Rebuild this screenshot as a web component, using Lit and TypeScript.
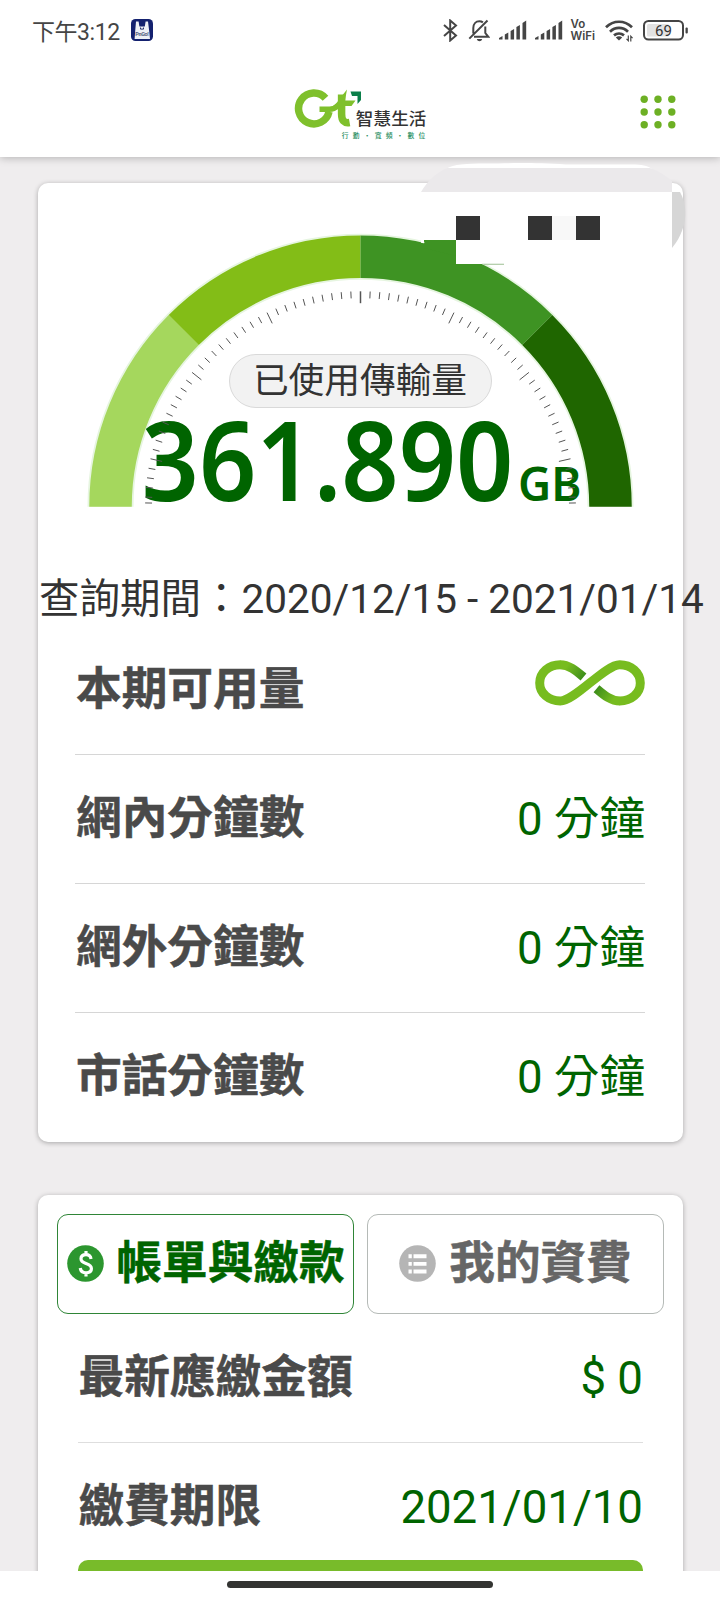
import { html, svg, css, LitElement } from "lit";
import { customElement, property, state } from "lit/decorators.js";
import { classMap } from "lit/directives/class-map.js";

interface UsageRow {
  label: string;
  value?: string;
  unlimited?: boolean;
}

@customElement("status-bar")
export class StatusBarElement extends LitElement {
  @property()
  time = "";

  @property({ type: Number })
  battery = 0;

  renderSignal() {
    return html`
      <svg class="signal" width="28" height="20" viewBox="0 0 28 20">
        <path d="M0 19.500v-1.500l3.500-2v3.500zM5.800 19.500v-5l3.500-2v7zM11.600 19.500v-8.500l3.500-2v10.500zM17.400 19.500v-12.500l3.500-2v14.500zM23.500 19.500v-16.500l3.700-2.500v19z" />
      </svg>
    `;
  }

  override render() {
    return html`
      <span class="time">${this.time}</span>
      <svg class="app" width="22" height="22" viewBox="0 0 22 22">
        <rect width="22" height="22" rx="4.500" fill="#14216f" />
        <path d="M5 2.500h2.600l.8 5h5.400l.8-5H17l1.200 9.500.8 8H3.600l.6-8z" fill="#eef0f6" />
        <path d="M9.500 8.500v1.600h3V8.500" fill="none" stroke="#26306b" stroke-width="1" />
        <text x="4.200" y="16.600" font-size="5.500" font-weight="700" fill="#555b80" textLength="13.600">PnGo!</text>
      </svg>
      <div class="icons">
        <svg width="15" height="23" viewBox="0 0 15 23" class="line">
          <path d="M1 6l12 10.500-5.800 5V1.500L13 6.500 1 17" />
        </svg>
        <svg class="bell" width="22" height="23" viewBox="0 0 22 23">
          <g class="line">
            <path d="M1.300 19.600L19.500 1.500M5.300 14.500V9c0-4 2.600-6.800 6-6.800 1.300 0 2.600.4 3.600 1.200M17.300 7.500V14l3 3.800H6" />
          </g>
          <path d="M8.800 20h5.400c-.5 1.600-1.400 2.200-2.700 2.200S9.300 21.600 8.800 20z" />
        </svg>
        ${this.renderSignal()} ${this.renderSignal()}
        <span class="vowifi"><b>Vo</b><b>WiFi</b></span>
        <svg class="wifi" width="28" height="23" viewBox="0 0 28 23">
          <g fill="none" stroke="#454545" stroke-width="2.700">
            <path d="M1 8.300C8.500.9 19.500.9 27 8.300" />
            <path d="M5 12.700c5.200-5 12.800-5 18 0" />
            <path d="M9 16.400c3-2.500 7-2.500 10 0" />
          </g>
          <path d="M10.800 18.400c1.900-1.500 4.500-1.500 6.400 0L14 21.600z" />
          <path d="M23.300 16.500v5.200l-1.800-1.800M25.800 22.500v-5.200l1.800 1.800" fill="none" stroke="#454545" stroke-width="1.200" />
        </svg>
        <svg class="battery" width="46" height="21" viewBox="0 0 46 21">
          <rect x="1" y="1" width="39" height="18.500" rx="4.500" fill="#fff" stroke="#454545" stroke-width="2" />
          <rect x="4" y="4" width="22" height="12.500" rx="1.500" fill="#e2e2e2" />
          <rect x="42.500" y="7.500" width="2.300" height="6" rx="1" />
          <text x="20.500" y="15.500" font-size="15" text-anchor="middle" fill="#333">${this.battery}</text>
        </svg>
      </div>
    `;
  }

  static styles = css`
    :host {
      display: flex;
      align-items: center;
      box-sizing: border-box;
      height: 60px;
      padding: 0 31.5px 0 32px;
      font-family: Roboto, "Noto Sans CJK TC", sans-serif;
      color: #454545;
      fill: #454545;
    }

    .time {
      margin-top: -1px;
      font-size: 23px;
      letter-spacing: -0.45px;
    }

    .app {
      margin-left: 11px;
    }

    .icons {
      display: flex;
      align-items: center;
      margin-left: auto;
    }

    .line {
      fill: none;
      stroke: #454545;
      stroke-width: 2;
    }

    .bell {
      margin: 0 8.5px 0 10px;
    }

    .signal {
      margin-right: 8px;
    }

    .vowifi {
      display: flex;
      flex-direction: column;
      width: 26px;
      font-family: Inter, sans-serif;
      font-size: 11.5px;
      line-height: 12px;
    }

    .vowifi b {
      font-weight: 600;
    }

    .wifi {
      margin: 0 10px 0 8px;
    }
  `;
}

@customElement("site-header")
export class SiteHeaderElement extends LitElement {
  override render() {
    return html`
      <svg class="logo" width="134" height="54" viewBox="294 87 134 54">
        <g fill="none" stroke="#7fc02c" stroke-width="7.500">
          <path d="M325.500 98.300A15.400 15.400 0 1 0 329 111.800" />
          <path d="M319.500 109.300h10c4.500 0 6-1.300 8.500-3.500" stroke-width="5.500" />
          <path d="M341.600 94.500v19.500c0 6.500 2.500 9.500 8 8.500" />
        </g>
        <path d="M331 107c5-1.500 8-8 12-12.500l4-5-2 11h10.500l-4 5.500h-6.500l-8 .5-5 4z" fill="#7fc02c" />
        <path d="M350.500 91.500H361v8.500l-3.500 4v-8h-5.500z" fill="#0b7f4a" />
        <text x="355.800" y="124.500" font-size="17.500" font-weight="500" textLength="70.500" fill="#333">智慧生活</text>
        <text x="341.800" y="137.800" font-size="6.800" font-weight="500" textLength="83.500" fill="#2c9166">行動・寬頻・數位</text>
      </svg>
      <svg class="menu" width="36" height="34" viewBox="0 0 36 34">
        ${[4.2, 17, 29.8].map((y) =>
          [4.2, 18, 31.8].map((x) => svg`<circle cx=${x} cy=${y} r="3.700" />`)
        )}
      </svg>
    `;
  }

  static styles = css`
    :host {
      display: grid;
      grid-template-columns: 1fr auto 1fr;
      align-items: center;
      box-sizing: border-box;
      height: 97px;
      padding: 11px 44.5px 0 46.5px;
      font-family: "Noto Sans CJK TC", sans-serif;
    }

    .logo {
      grid-column: 2;
    }

    .menu {
      justify-self: end;
      margin-bottom: 4px;
      fill: #6db024;
    }
  `;
}

@customElement("usage-gauge")
export class UsageGaugeElement extends LitElement {
  @property()
  amount = "";

  @property()
  unit = "GB";

  private cx = 322.5;
  private cy = 323.7;

  point(r: number, deg: number) {
    const a = (deg * Math.PI) / 180;
    return `${this.cx - r * Math.cos(a)} ${this.cy - r * Math.sin(a)}`;
  }

  arc(r: number, from: number, to: number) {
    return `M${this.point(r, from)}A${r} ${r} 0 0 1 ${this.point(r, to)}`;
  }

  renderTicks() {
    return Array.from({ length: 71 }, (_, i) => {
      const major = i % 10 === 5;
      const deg = Math.min(179, Math.max(1, (i * 180) / 70));
      return svg`
        <path
          d="M${this.point(215.4, deg)}L${this.point(major ? 203.5 : 208.5, deg)}"
          stroke="#555"
          stroke-width=${i === 35 ? 1.5 : 1}
        />
      `;
    });
  }

  override render() {
    const colors = ["#a5d75d", "#83bd17", "#3e9323", "#1f6600"];
    return html`
      <svg width="645" height="385" viewBox="0 0 645 385">
        <g fill="none">
          <path d=${this.arc(250, 0, 180)} stroke="#e6f5e0" stroke-width="46" />
          ${colors.map(
            (c, i) => svg`<path d=${this.arc(250, i * 45, i * 45 + 45)} stroke=${c} stroke-width="42.500" />`
          )}
        </g>
        <rect x="191.500" y="171.500" width="262" height="53" rx="26.500" fill="#f2f2f2" stroke="#d9d9d9" />
        <text class="caption" x="322" y="209.500" text-anchor="middle">已使用傳輸量</text>
        <text class="amount" x="103.500" y="317.700" textLength="372" lengthAdjust="spacingAndGlyphs">${this.amount}</text>
        <text class="unit" x="480" y="317.700" textLength="63.500" lengthAdjust="spacingAndGlyphs">${this.unit}</text>
        ${this.renderTicks()}
      </svg>
    `;
  }

  static styles = css`
    :host,
    svg {
      display: block;
    }

    .caption {
      font: 35.7px "Noto Sans CJK TC", sans-serif;
      fill: #333;
    }

    .amount,
    .unit {
      font: 600 110px "Noto Sans", sans-serif;
      fill: #006400;
    }

    .unit {
      font-size: 47px;
    }
  `;
}

@customElement("app-root")
export class AppRootElement extends LitElement {
  @state()
  private tab = 0;

  private usage: UsageRow[] = [
    { label: "本期可用量", unlimited: true },
    { label: "網內分鐘數", value: "0 分鐘" },
    { label: "網外分鐘數", value: "0 分鐘" },
    { label: "市話分鐘數", value: "0 分鐘" }
  ];

  private bill: UsageRow[] = [
    { label: "最新應繳金額", value: "$ 0" },
    { label: "繳費期限", value: "2021/01/10" }
  ];

  renderInfinity() {
    return html`
      <svg class="infinity" width="110" height="46" viewBox="0 0 110 46">
        <defs>
          <linearGradient id="fade-l" gradientUnits="userSpaceOnUse" x1="32" y1="6" x2="48" y2="17">
            <stop offset="0" stop-color="#77bc1f" />
            <stop offset="1" stop-color="#3f8f1b" />
          </linearGradient>
          <linearGradient id="fade-r" gradientUnits="userSpaceOnUse" x1="78" y1="40" x2="62" y2="29">
            <stop offset="0" stop-color="#77bc1f" />
            <stop offset="1" stop-color="#3f8f1b" />
          </linearGradient>
        </defs>
        <g fill="none" stroke-width="9">
          <path d="M25 4.700c9 0 15.500 5.500 23.500 12.300" stroke="url(#fade-l)" />
          <path d="M85 41c-9 0-15.500-5.500-23.500-12.300" stroke="url(#fade-r)" />
          <path d="M42 35.500L68 10.200" stroke="#fff" stroke-width="13" />
          <path
            d="M25.300 4.700C14 4.700 4.700 12.500 4.700 23S14 41 25.300 41C40 41 70 4.700 84.700 4.700 96 4.700 105.300 12.500 105.300 23S96 41 84.700 41"
            stroke="#77bc1f"
          />
        </g>
      </svg>
    `;
  }

  renderRow(row: UsageRow) {
    return html`
      <div class="row">
        <span class="label">${row.label}</span>
        ${row.unlimited ? this.renderInfinity() : html`<span class="value">${row.value}</span>`}
      </div>
    `;
  }

  // blocked-out phone number over the corner of the card
  renderRedaction() {
    return html`
      <svg class="redaction" width="266" height="104" viewBox="421 162 266 104">
        <path d="M446 169c8-5 20-5.500 40-5.500 30-.5 50-.8 80 1h66c10 0 15 1 20 4.500z" fill="#fff" />
        <path d="M421 192c6-10 13-18 26-24h203c9 3 16 8 22 13v11z" fill="#ebe9eb" />
        <path d="M421 192h251v72H456v-24h-32z" fill="#fff" />
        <path d="M672 192h8c8.500 15 7.500 37-8 56z" fill="#d6d6d6" />
        <path d="M424 240h32v16l-32-8z" fill="#3e9323" />
        <path d="M421 240h2.500l1 3-1 .3-4-1z" fill="#fff" />
        <path d="M482 263.800h22v.9h-20z" fill="#9cbf92" />
        <path d="M456 216h24v24h-24zM528 216h24v24h-24zM576 216h24v24h-24z" fill="#333" />
        <path d="M552 216h24v24h-24z" fill="#f8f8f8" />
      </svg>
    `;
  }

  renderTab(index: number, label: string, icon: unknown) {
    return html`
      <button
        class=${classMap({ tab: true, active: this.tab === index })}
        @click=${() => (this.tab = index)}
      >
        <svg class="tab-icon" width="37" height="37" viewBox="0 0 37 37">${icon}</svg>
        <span>${label}</span>
      </button>
    `;
  }

  override render() {
    return html`
      <div class="top">
        <status-bar time="下午3:12" battery="69"></status-bar>
        <site-header></site-header>
      </div>

      <main>
        <section class="card usage">
          <usage-gauge amount="361.890"></usage-gauge>
          <p class="period">查詢期間：2020/12/15 - 2021/01/14</p>
          <div class="rows">${this.usage.map((r) => this.renderRow(r))}</div>
          ${this.renderRedaction()}
        </section>

        <section class="card billing">
          <div class="tabs">
            ${this.renderTab(
              0,
              "帳單與繳款",
              svg`
                <circle cx="18.500" cy="18.500" r="18.300" fill="#2c962f" />
                <path
                  d="M24 14c-.3-2.800-2.200-4.300-5-4.300-3 0-5 1.600-5 4.100 0 2.700 2 3.700 5 4.700 3.400 1.100 5.400 2.200 5.400 5 0 2.700-2.200 4.300-5.400 4.300-3.300 0-5.400-1.700-5.700-4.800M19 6v4M19 27.500v4"
                  fill="none"
                  stroke="#fff"
                  stroke-width="3.200"
                />
              `
            )}
            ${this.renderTab(
              1,
              "我的資費",
              svg`
                <circle cx="18.500" cy="18.500" r="18.300" fill="#b5b5b5" />
                <path
                  d="M9.500 9.300h3.300v4H9.500zM14.500 9.300h13v4h-13zM9.500 17h3.300v3.800H9.500zM14.500 17h13v3.800h-13zM9.500 24.500h3.300v4H9.500zM14.500 24.500h13v4h-13z"
                  fill="#fff"
                />
              `
            )}
          </div>
          <div class="rows">${this.bill.map((r) => this.renderRow(r))}</div>
          <div class="pay"></div>
        </section>
      </main>

      <div class="nav"><i></i></div>
    `;
  }

  static styles = css`
    :host {
      display: flex;
      flex-direction: column;
      width: 720px;
      height: 1600px;
      overflow: hidden;
      background: #efedee;
      font-family: Roboto, "Noto Sans CJK TC", sans-serif;
      color: #333;
    }

    .top {
      position: relative;
      flex: none;
      background: #fff;
      box-shadow: 0 1px 8px rgba(0, 0, 0, 0.25);
    }

    main {
      display: flex;
      flex-direction: column;
      gap: 53px;
      flex: 1;
      min-height: 0;
      overflow: hidden;
      box-sizing: border-box;
      padding: 26px 37px 0 38px;
    }

    .card {
      position: relative;
      flex: none;
      border-radius: 10px;
      background: #fff;
      box-shadow: 0 1px 5px rgba(0, 0, 0, 0.3);
    }

    .usage {
      height: 959px;
    }

    .period {
      height: 59px;
      margin: 1px 0 -2px;
      padding-left: 1px;
      font-size: 40.5px;
      line-height: 60px;
      white-space: nowrap;
    }

    .rows {
      padding: 0 38px 0 37px;
    }

    .row {
      display: flex;
      align-items: center;
      justify-content: space-between;
      box-sizing: border-box;
      height: 129px;
      border-bottom: 1px solid #d6d6d6;
      font-size: 45.6px;
      line-height: 60px;
    }

    .row:last-child {
      border-bottom: none;
    }

    .label {
      padding: 0 0 11px 1px;
      font-family: "Noto Sans CJK TC", sans-serif;
      font-size: 45.7px;
      font-weight: 700;
      color: #4a4a4a;
      -webkit-text-stroke: 0.5px;
    }

    .value {
      padding-top: 1px;
      color: #006400;
    }

    .infinity {
      margin-bottom: 14px;
    }

    .redaction {
      position: absolute;
      left: 383px;
      top: -21px;
    }

    .billing {
      box-sizing: border-box;
      height: 440px;
      padding-top: 19px;
    }

    .tabs {
      display: grid;
      grid-template-columns: 1fr 1fr;
      gap: 13px;
      padding: 0 19px;
    }

    .tab {
      display: flex;
      align-items: center;
      justify-content: center;
      gap: 13px;
      height: 100px;
      padding: 0;
      border: 1px solid #b5bab7;
      border-radius: 11px;
      background: #fff;
      font-family: "Noto Sans CJK TC", sans-serif;
      font-size: 45.6px;
      font-weight: 700;
      line-height: 60px;
      color: #666;
      white-space: nowrap;
      -webkit-text-stroke: 0.5px;
    }

    .tab-icon {
      margin-bottom: 1px;
    }

    .tab span {
      padding-bottom: 11px;
    }

    .tab.active {
      border-color: #2f8537;
      color: #006400;
    }

    .billing .rows {
      padding: 0 40px 0 39.5px;
    }

    .billing .row {
      border-color: #dedede;
    }

    .pay {
      height: 60px;
      margin: -12px 40px 0 39.5px;
      border-radius: 10px;
      background: #78bb2a;
    }

    .nav {
      display: flex;
      flex: none;
      justify-content: center;
      height: 29px;
      background: #fff;
    }

    .nav i {
      width: 266px;
      height: 7px;
      margin-top: 9.5px;
      border-radius: 4px;
      background: #333432;
    }
  `;
}
